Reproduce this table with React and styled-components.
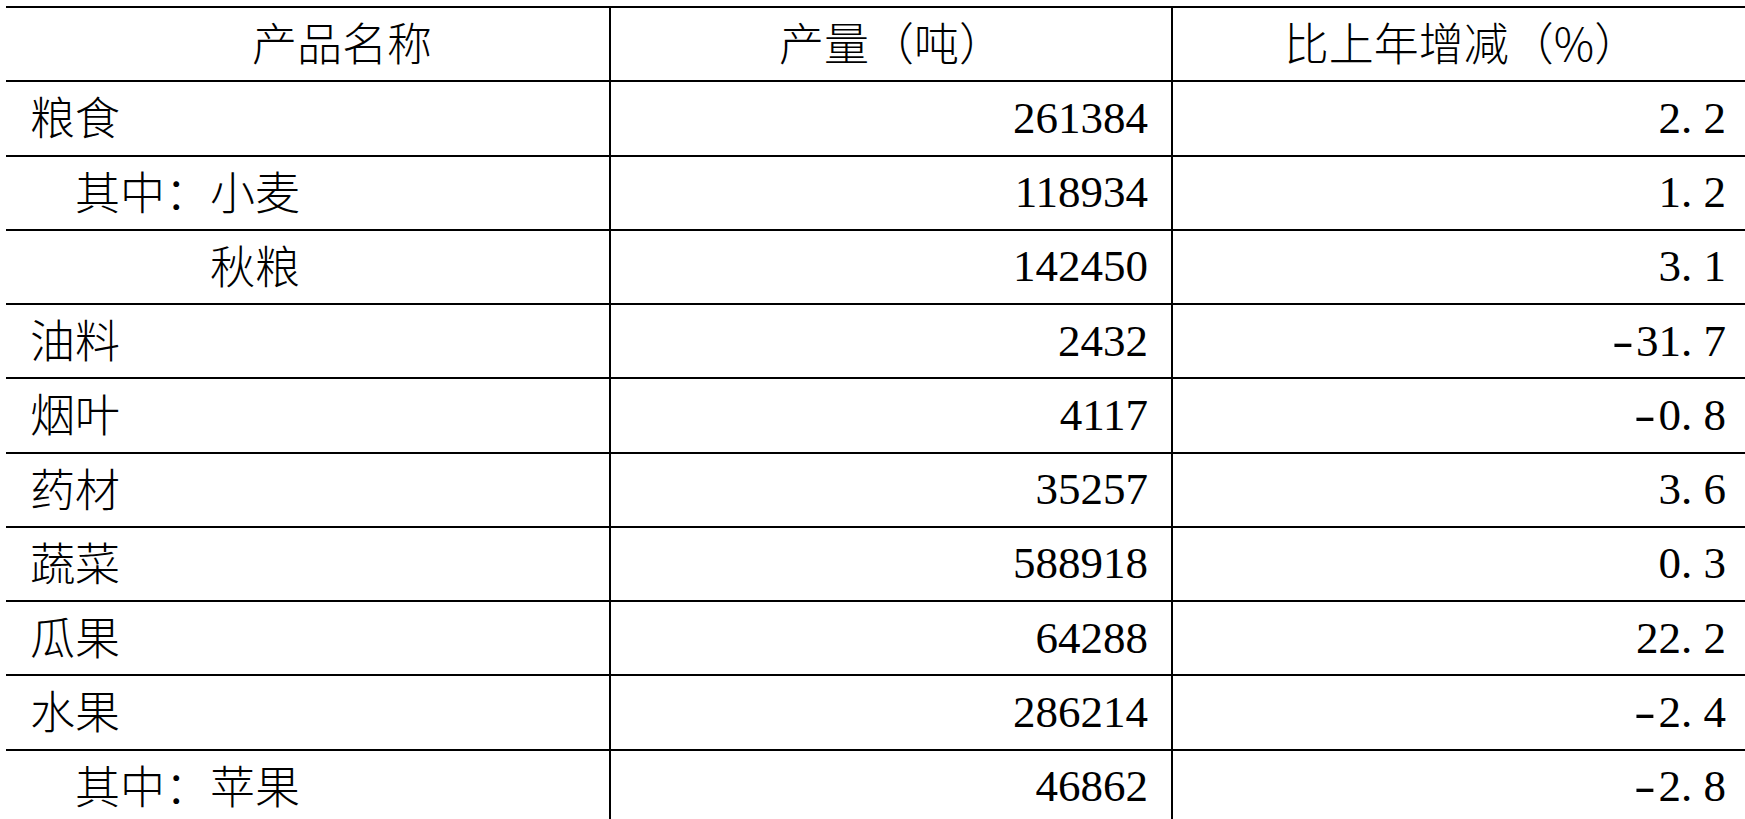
import React from 'react';
import styled, {createGlobalStyle} from 'styled-components';

//<<-- styling -->>
const Global = createGlobalStyle`
    html, body {
        margin: 0;
        padding: 0;
        background: #ffffff;
        overflow: hidden;
    }
`
const Page = styled.div`
    padding: 6px 0 0 6px;
    width: 1743px;
`
const Table = styled.div`
    display: flex;
    flex-direction: column;
    border-top: 2px solid #000;
`
const Row = styled.div`
    display: grid;
    grid-template-columns: 603px 562px 1fr;
    height: 72.25px;
    border-bottom: 2px solid #000;
`
const Cell = styled.div`
    display: flex;
    align-items: center;
    justify-content: ${p => p.$align === 'right' ? 'flex-end' : p.$align === 'center' ? 'center' : 'flex-start'};
    border-left: ${p => p.$first ? 'none' : '2px solid #000'};
    padding: 0 23px 0 24px;
    color: #000;
    overflow: hidden;
    white-space: nowrap;
`
const Label = styled.span`
    font-family: "Noto Sans CJK SC", "Noto Sans CJK JP", sans-serif;
    font-weight: 300;
    font-size: 45px;
    line-height: 1;
    padding-left: ${p => p.$indent || 0}em;
    padding-bottom: 5px;
    margin-left: ${p => p.$shift || 0}px;
`
const Figure = styled.span`
    font-family: "Liberation Serif", "Times New Roman", serif;
    font-size: 45px;
    line-height: 1;
`
const Dot = styled.span`
    margin-right: 0.25em;
`
// hyphen stretched to a half-width dash, box kept inside its own cell
const Minus = styled.span`
    display: inline-block;
    margin-right: 0.167em;
    transform: translateX(-2px) scaleX(1.45);
    transform-origin: left center;
`

const rows = [
    {name: '粮食', indent: 0, amount: '261384', change: '2.2'},
    {name: '其中：小麦', indent: 1, amount: '118934', change: '1.2'},
    {name: '秋粮', indent: 4, amount: '142450', change: '3.1'},
    {name: '油料', indent: 0, amount: '2432', change: '-31.7'},
    {name: '烟叶', indent: 0, amount: '4117', change: '-0.8'},
    {name: '药材', indent: 0, amount: '35257', change: '3.6'},
    {name: '蔬菜', indent: 0, amount: '588918', change: '0.3'},
    {name: '瓜果', indent: 0, amount: '64288', change: '22.2'},
    {name: '水果', indent: 0, amount: '286214', change: '-2.4'},
    {name: '其中：苹果', indent: 1, amount: '46862', change: '-2.8'},
]

// half-width figures, like the song-ti digits of the source table
const Num = ({value}) => (
    <Figure>
        {value.split('').map((ch, i) => {
            if (ch === '.') return <Dot key={i}>.</Dot>
            if (ch === '-') return <Minus key={i}>-</Minus>
            return ch
        })}
    </Figure>
)

//<<<--- code --->>>
export default function App() {
    return (
        <Page>
            <Global/>
            <Table>
                <Row>
                    <Cell $first $align="center"><Label $shift={68}>产品名称</Label></Cell>
                    <Cell $align="center"><Label>产量（吨）</Label></Cell>
                    <Cell $align="center"><Label>比上年增减（%）</Label></Cell>
                </Row>
                {rows.map((r, i) => (
                    <Row key={i}>
                        <Cell $first><Label $indent={r.indent}>{r.name}</Label></Cell>
                        <Cell $align="right"><Num value={r.amount}/></Cell>
                        <Cell $align="right"><Num value={r.change}/></Cell>
                    </Row>
                ))}
            </Table>
        </Page>
    )
}
